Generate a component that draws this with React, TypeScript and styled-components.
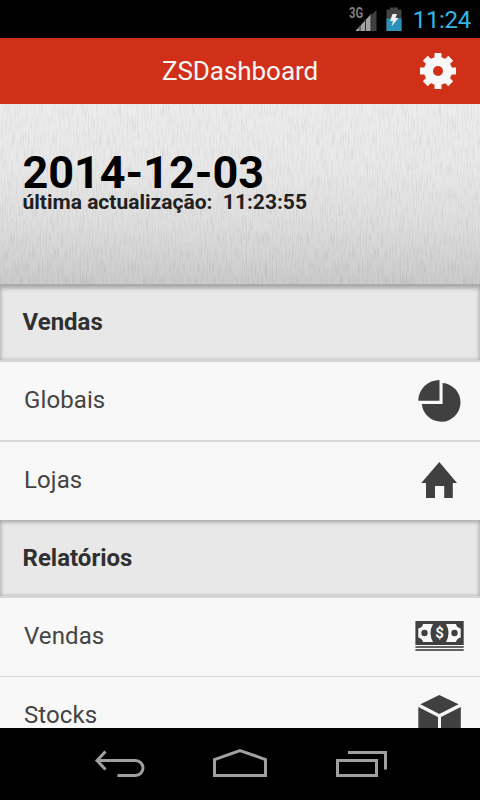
import React from 'react';
import styled, { createGlobalStyle } from 'styled-components';

const GlobalStyle = createGlobalStyle`
  * { box-sizing: border-box; }
  body { margin: 0; background: #000; font-family: Roboto, "Noto Sans", sans-serif; }
`;

const Screen = styled.div`
  width: 480px;
  height: 800px;
  display: flex;
  flex-direction: column;
  overflow: hidden;
  background: #f8f8f8;
`;

const StatusBar = styled.div`
  flex: 0 0 38px;
  display: flex;
  align-items: center;
  justify-content: flex-end;
  padding-right: 9px;
  background: #000;
`;

const Clock = styled.span`
  margin-left: 11px;
  padding-top: 1px;
  color: #33b5e5;
  font-size: 24px;
  line-height: 30px;
  letter-spacing: -0.3px;
`;

const AppBar = styled.header`
  flex: 0 0 66px;
  display: grid;
  grid-template-columns: 60px 1fr 60px;
  align-items: center;
  justify-items: center;
  background: #d03018;
`;

const Title = styled.h1`
  grid-column: 2;
  margin: 0;
  color: #f8f8f8;
  font-size: 26px;
  line-height: 32px;
  font-weight: 400;
  letter-spacing: -0.05px;
`;

const SettingsButton = styled.button`
  width: 36px;
  height: 36px;
  padding: 0;
  border: 0;
  background: none;
  margin-right: 24px;
`;

const Hero = styled.section`
  flex: 0 0 182px;
  position: relative;
  padding: 47px 22.5px 0;
  border-bottom: 2px solid #aaa;
  background: linear-gradient(#eaeaea 0%, #e6e6e6 35%, #dadada 68%, #c6c6c6 100%);
`;

const Texture = styled.svg`
  position: absolute;
  inset: 0;
  width: 100%;
  height: 100%;
`;

const HeroDate = styled.div`
  position: relative;
  color: #000;
  font-size: 45px;
  line-height: 43px;
  font-weight: 700;
  letter-spacing: -0.05px;
  white-space: nowrap;
`;

const HeroUpdate = styled.div`
  position: relative;
  margin-top: -2px;
  color: #202020;
  font-size: 21px;
  line-height: 20px;
  font-weight: 700;
  white-space: pre;
`;

const List = styled.main`
  flex: 1 1 0;
  min-height: 0;
  overflow: hidden;
`;

const SectionHeading = styled.h2<{ $height: number; $top: number }>`
  height: ${p => p.$height}px;
  margin: 0;
  padding: ${p => p.$top}px 22.5px 0;
  color: #303030;
  background: #e8e8e8;
  border-bottom: 2px solid #d6d6d6;
  box-shadow: inset 0 2px 4px #a8a8a8, inset 0 0 4px #b8b8b8;
  font-size: 24px;
  line-height: 30px;
  font-weight: 700;
`;

const Row = styled.div<{ $height: number; $line?: number }>`
  height: ${p => p.$height}px;
  display: flex;
  justify-content: space-between;
  align-items: flex-start;
  padding: 0 14px 0 24px;
  background: #f8f8f8;
  border-bottom: ${p => p.$line ?? 0}px solid #d7d7d7;
`;

const RowLabel = styled.span<{ $top: number }>`
  padding-top: ${p => p.$top}px;
  color: #444;
  font-size: 24px;
  line-height: 30px;
  letter-spacing: 0.1px;
`;

const RowIcon = styled.svg<{ $top: number }>`
  flex: none;
  display: block;
  margin-top: ${p => p.$top}px;
  width: 54px;
  height: 50px;
  fill: #404040;
`;

const NavBar = styled.nav`
  flex: 0 0 72px;
  display: flex;
  align-items: center;
  justify-content: space-between;
  padding: 0 90px 0 92px;
  background: #000;
`;

const NavIcon = styled.svg`
  width: 58px;
  height: 40px;
  fill: none;
  stroke: #a0a0a0;
  stroke-width: 3;
`;

const Signal = () => (
  <svg width="30" height="28" viewBox="349 4 30 28">
    <text transform="translate(350 17.3) scale(0.8 1)" fill="#808080" fontSize="14" fontWeight="700" fontFamily="Roboto, sans-serif">3G</text>
    <path d="M356.5 30L377.5 9V7.5H377.5V30Z" fill="#404040" />
    <path d="M356.5 30L372 13V30Z" fill="#a2a2a2" />
    <path d="M361 24V30M366.5 18V30M372 12V30" stroke="#303030" strokeWidth="1" />
  </svg>
);

const Battery = () => (
  <svg width="16" height="28" viewBox="387 4 16 28">
    <path d="M387.5 8.5H391V6.5H399V8.5H402.5V30H387.5Z" fill="#434343" />
    <path d="M387.5 17.5H402.5V30H387.5Z" fill="#2b91b8" />
    <path d="M393.5 13H398L396.5 17H399.5L392.5 25.5L394 20H391Z" fill="#eee" />
  </svg>
);

const BatterySlot = styled.span`
  display: flex;
  margin-left: 8px;
`;

const Gear = () => (
  <svg width="36" height="36" viewBox="-18 -18 36 36" fill="#f8f8f8">
    {[0, 45, 90, 135].map(a => (
      <rect key={a} x="-3.5" y="-18" width="7" height="36" transform={`rotate(${a})`} />
    ))}
    <circle r="14" />
    <circle r="5" fill="#d03018" />
  </svg>
);

const Pie = () => (
  <RowIcon $top={13} viewBox="412 375 54 50">
    <path d="M442.6 383A19.4 19.4 0 1 1 421.8 404H442.6Z" />
    <path d="M439.5 380V400.8H418.3A21 20.8 0 0 1 439.5 380Z" />
  </RowIcon>
);

const House = () => (
  <RowIcon $top={13} viewBox="412 455 54 50">
    <path d="M439.3 462L457 483H452.8V498H444.2V486H435V498H426V483H421.3Z" />
  </RowIcon>
);

const Cash = () => (
  <RowIcon $top={13} viewBox="412 611 54 50">
    <rect x="415.4" y="621" width="48.3" height="24" />
    <rect x="415.4" y="646.2" width="48.3" height="1.6" />
    <rect x="415.4" y="649.2" width="48.3" height="1.6" />
    <path fill="#f8f8f8" d="M423 624H433Q428 633 433 642H423Q422.5 638.5 418.3 637.5V628.5Q422.5 627.5 423 624Z" />
    <path fill="#f8f8f8" d="M456 624H446Q451 633 446 642H456Q456.5 638.5 460.7 637.5V628.5Q456.5 627.5 456 624Z" />
    <circle cx="424.5" cy="633" r="3.2" />
    <circle cx="454.5" cy="633" r="3.2" />
    <text x="439.5" y="638.2" textAnchor="middle" fill="#f8f8f8" fontFamily="Roboto, sans-serif" fontSize="15" fontWeight="700">$</text>
  </RowIcon>
);

const Cube = () => (
  <RowIcon $top={13} viewBox="412 690 54 50">
    <path d="M439.3 695L458.6 704.3L439.3 714L420.4 704.3Z" />
    <path d="M418.3 707L438 717V739L418.3 729Z" />
    <path d="M460.8 707L441 717V739L460.8 729Z" />
  </RowIcon>
);

const Brushed = () => (
  <Texture aria-hidden="true">
    <filter id="brushed" x="0" y="0" width="100%" height="100%" colorInterpolationFilters="sRGB">
      <feTurbulence type="fractalNoise" baseFrequency="0.8 0.07" numOctaves="3" seed="8" />
      <feColorMatrix values="1.8 0 0 0 0  1.8 0 0 0 0  1.8 0 0 0 0  0 0 0 0 0.08" />
    </filter>
    <rect width="100%" height="100%" filter="url(#brushed)" />
  </Texture>
);

export default function App() {
  return (
    <Screen>
      <GlobalStyle />
      <StatusBar>
        <Signal />
        <BatterySlot><Battery /></BatterySlot>
        <Clock>11:24</Clock>
      </StatusBar>
      <AppBar>
        <Title>ZSDashboard</Title>
        <SettingsButton aria-label="Settings"><Gear /></SettingsButton>
      </AppBar>
      <Hero>
        <Brushed />
        <HeroDate>2014-12-03</HeroDate>
        <HeroUpdate>última actualização:  11:23:55</HeroUpdate>
      </Hero>
      <List>
        <SectionHeading $height={76} $top={21}>Vendas</SectionHeading>
        <Row $height={80} $line={2}><RowLabel $top={23}>Globais</RowLabel><Pie /></Row>
        <Row $height={78}><RowLabel $top={23}>Lojas</RowLabel><House /></Row>
        <SectionHeading $height={78} $top={23}>Relatórios</SectionHeading>
        <Row $height={79} $line={1}><RowLabel $top={23}>Vendas</RowLabel><Cash /></Row>
        <Row $height={79}><RowLabel $top={23}>Stocks</RowLabel><Cube /></Row>
      </List>
      <NavBar>
        <NavIcon viewBox="92 746 58 40">
          <path d="M98 762.5H135.5A7.5 7.5 0 0 1 135.5 777.5H117.5M105.5 753.5L97 762.5L105.5 771.5" />
        </NavIcon>
        <NavIcon viewBox="212 746 58 40">
          <path d="M214.5 777.5V761.5L240 752.5L265.5 761.5V777.5Z" />
        </NavIcon>
        <NavIcon viewBox="332 746 58 40">
          <path d="M337.5 762.5H376.5V777.5H337.5ZM348 754.5H385.5V771.5" />
        </NavIcon>
      </NavBar>
    </Screen>
  );
}
